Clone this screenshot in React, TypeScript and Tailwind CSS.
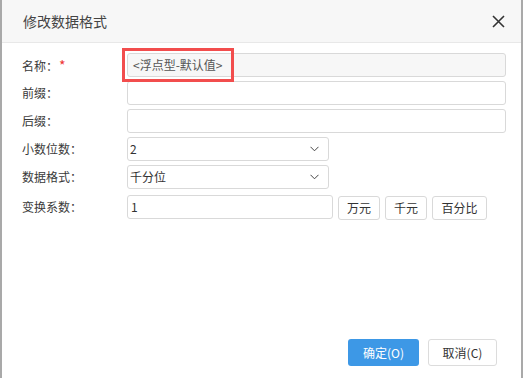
import React from 'react';

const labelCls = 'w-[105px] shrink-0 text-[12px] text-[#3a3a3a]';
const boxCls = 'h-6 border border-[#d9d9d9] rounded-[3px] px-[5px] flex items-center text-[12px] text-[#333]';
const btnCls = 'h-6 border border-[#d9d9d9] rounded-[3px] bg-white text-[12px] text-[#333]';

const Chevron = () => (
  <svg width="9" height="6" viewBox="0 0 9 6" className="ml-auto mr-[4px]">
    <path d="M0.5 0.8 L4.5 4.8 L8.5 0.8" fill="none" stroke="#444" strokeWidth="1" />
  </svg>
);

const App: React.FC = () => {
  return (
    <div
      className="w-[523px] h-[378px] flex bg-[#a9a9a9] overflow-hidden"
      style={{ fontFamily: '"Noto Sans CJK SC", "Microsoft YaHei", sans-serif' }}
    >
      <div className="w-[2px] shrink-0" />
      <div className="flex-1 flex flex-col bg-white">
        {/* header */}
        <div className="h-[43px] shrink-0 bg-[#f7f7f7] border-b border-[#e8e8e8] flex items-center pl-[21px] pr-[16px]">
          <span className="text-[14px] text-[#444]">修改数据格式</span>
          <svg width="13" height="13" viewBox="0 0 13 13" className="ml-auto">
            <path d="M1 1 L12 12 M12 1 L1 12" stroke="#333" strokeWidth="1.6" />
          </svg>
        </div>

        {/* form */}
        <div className="flex-1 flex flex-col gap-1 pt-[10px] pl-[20px] pr-[15px]">
          <div className="flex items-center">
            <div className={labelCls}>
              名称：<span className="text-[#e33] text-[14px] ml-[1px]">*</span>
            </div>
            <div className="relative flex-1">
              <div className={`${boxCls} bg-[#f7f7f7] text-[#555]`}>&lt;浮点型-默认值&gt;</div>
              <div className="absolute left-[-5px] top-[-5px] w-[112px] h-[34px] border-[3px] border-[#f24d4d]" />
            </div>
          </div>
          <div className="flex items-center">
            <div className={labelCls}>前缀：</div>
            <div className={`${boxCls} bg-white flex-1`} />
          </div>
          <div className="flex items-center">
            <div className={labelCls}>后缀：</div>
            <div className={`${boxCls} bg-white flex-1`} />
          </div>
          <div className="flex items-center">
            <div className={labelCls}>小数位数：</div>
            <div className={`${boxCls} bg-white w-[202px] pl-[2px]`}>
              2
              <Chevron />
            </div>
          </div>
          <div className="flex items-center">
            <div className={labelCls}>数据格式：</div>
            <div className={`${boxCls} bg-white w-[202px] pl-[2px]`}>
              千分位
              <Chevron />
            </div>
          </div>
          <div className="flex items-center">
            <div className={labelCls}>变换系数：</div>
            <div className={`${boxCls} bg-white w-[206px] pl-[3px]`}>1</div>
            <div className="flex gap-[5px] ml-[5px] mt-[3px]">
              <button className={`${btnCls} w-[42px]`}>万元</button>
              <button className={`${btnCls} w-[42px]`}>千元</button>
              <button className={`${btnCls} w-[55px]`}>百分比</button>
            </div>
          </div>
        </div>

        {/* footer */}
        <div className="flex justify-end gap-[9px] pr-[24px] pb-[12px]">
          <button className="h-[27px] w-[71px] rounded-[3px] bg-[#3d98e6] text-white text-[12px]">确定(O)</button>
          <button className="h-[27px] w-[69px] rounded-[3px] border border-[#dcdcdc] bg-white text-[#333] text-[12px]">取消(C)</button>
        </div>
      </div>
      <div className="w-[2px] shrink-0" />
    </div>
  );
};

export default App;
